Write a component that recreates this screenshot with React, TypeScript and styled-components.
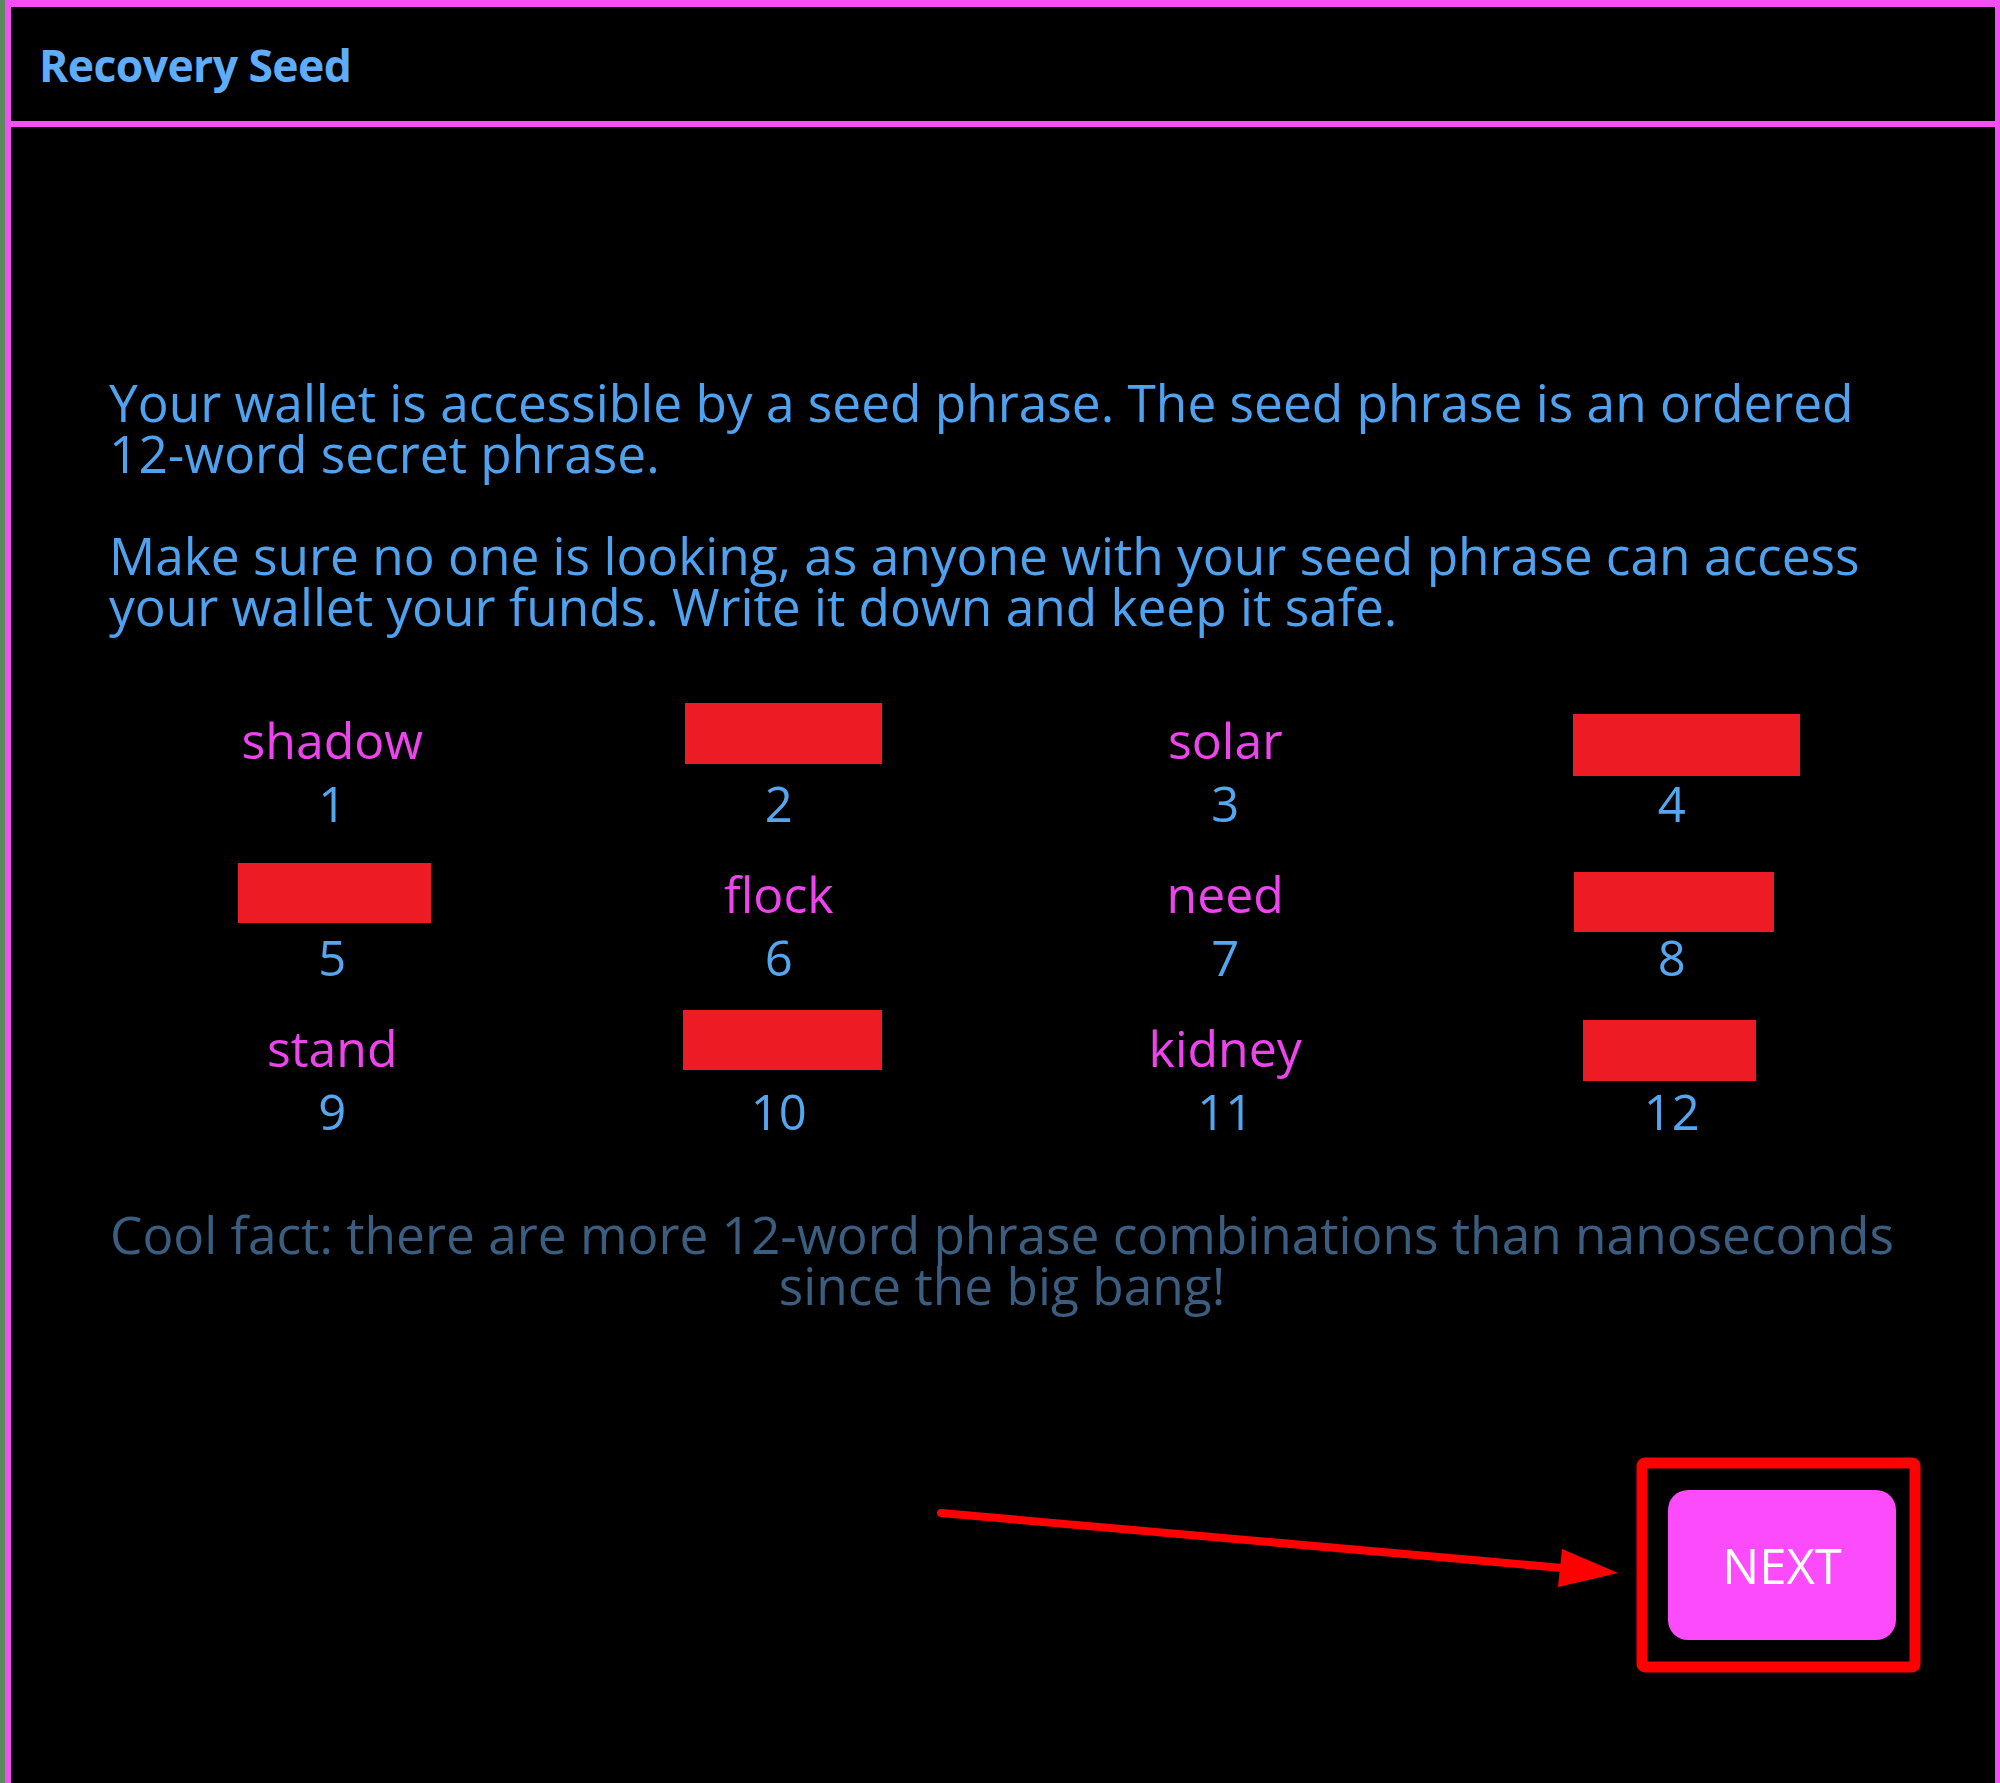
import styled, { createGlobalStyle } from 'styled-components';

const GlobalStyle = createGlobalStyle`
  html, body {
    margin: 0;
    padding: 0;
    background: #5b8a5e;
  }
  body {
    font-family: "Open Sans", "Noto Sans", sans-serif;
  }
`;

interface SeedWord {
  index: number;
  word?: string;
  // redaction box: width, height, offset from the slot centre
  hide?: { w: number; h: number; dx: number; dy: number };
}

const words: SeedWord[] = [
  { index: 1, word: 'shadow' },
  { index: 2, hide: { w: 197, h: 61, dx: 5, dy: -7 } },
  { index: 3, word: 'solar' },
  { index: 4, hide: { w: 227, h: 62, dx: 15, dy: 4 } },
  { index: 5, hide: { w: 193, h: 60, dx: 2, dy: -2 } },
  { index: 6, word: 'flock' },
  { index: 7, word: 'need' },
  { index: 8, hide: { w: 200, h: 60, dx: 2, dy: 7 } },
  { index: 9, word: 'stand' },
  { index: 10, hide: { w: 199, h: 60, dx: 4, dy: -9 } },
  { index: 11, word: 'kidney' },
  { index: 12, hide: { w: 173, h: 61, dx: -2, dy: 2 } },
];

export default function App() {
  return (
    <>
      <GlobalStyle />
      <Page>
        <Panel>
          <Header>
            <Title>Recovery Seed</Title>
          </Header>
          <Body>
            <Paragraph>
              Your wallet is accessible by a seed phrase. The seed phrase is an ordered 12-word secret phrase.
            </Paragraph>
            <Paragraph>
              Make sure no one is looking, as anyone with your seed phrase can access your wallet your funds. Write
              it down and keep it safe.
            </Paragraph>
            <WordGrid>
              {words.map((w) => (
                <WordCell key={w.index}>
                  <WordSlot>
                    {w.word ? (
                      <Word>{w.word}</Word>
                    ) : (
                      <Redacted $w={w.hide!.w} $h={w.hide!.h} $dx={w.hide!.dx} $dy={w.hide!.dy} />
                    )}
                  </WordSlot>
                  <Index>{w.index}</Index>
                </WordCell>
              ))}
            </WordGrid>
            <CoolFact>
              Cool fact: there are more 12-word phrase combinations than nanoseconds
              <br />
              since the big bang!
            </CoolFact>
            <Actions>
              <NextButton type="button">NEXT</NextButton>
            </Actions>
          </Body>
        </Panel>
        <Annotation viewBox="0 0 2000 1783" width="2000" height="1783">
          <line x1="941" y1="1513" x2="1562" y2="1568" stroke="#ff0000" strokeWidth="8" strokeLinecap="round" />
          <polygon points="1618,1573 1558,1587 1562,1549" fill="#ff0000" />
          <rect x="1642" y="1463" width="273" height="204" rx="3" fill="none" stroke="#ff0000" strokeWidth="11" />
        </Annotation>
      </Page>
    </>
  );
}

const Page = styled.div`
  position: relative;
  width: 2000px;
  height: 1783px;
  overflow: hidden;
  padding-left: 5px;
  box-sizing: border-box;
`;

const Panel = styled.div`
  min-height: 1800px;
  background: #000;
  border: 6px solid #f44ef4;
  border-bottom: none;
  border-top-width: 7px;
  border-right-width: 5px;
  box-sizing: border-box;
`;

const Header = styled.div`
  height: 120px;
  display: flex;
  align-items: center;
  padding: 0 0 0 28px;
  box-sizing: border-box;
  border-bottom: 6px solid #f44ef4;
`;

const Title = styled.h1`
  margin: 0;
  font-size: 44.5px;
  font-weight: 700;
  letter-spacing: -0.6px;
  color: #5eacfa;
`;

const Body = styled.div`
  padding: 250px 100px 0 98px;
  display: flex;
  flex-direction: column;
`;

const Paragraph = styled.p`
  margin: 0 0 51px;
  font-size: 51.4px;
  line-height: 51px;
  color: #4ea2f0;
`;

const WordGrid = styled.div`
  display: grid;
  grid-template-columns: repeat(4, 1fr);
  row-gap: 28px;
  margin-top: 26px;
`;

const WordCell = styled.div`
  display: flex;
  flex-direction: column;
  align-items: center;
`;

const WordSlot = styled.div`
  height: 63px;
  display: flex;
  align-items: center;
  justify-content: center;
`;

const Word = styled.span`
  font-size: 50px;
  line-height: 63px;
  color: #ee44ee;
`;

const Redacted = styled.span<{ $w: number; $h: number; $dx: number; $dy: number }>`
  display: block;
  width: ${(p) => p.$w}px;
  height: ${(p) => p.$h}px;
  background: #ed1c24;
  transform: translate(${(p) => p.$dx}px, ${(p) => p.$dy}px);
`;

const Index = styled.span`
  font-size: 49px;
  line-height: 63px;
  color: #55a6f0;
`;

const CoolFact = styled.p`
  margin: 66px -30px 0;
  font-size: 51.4px;
  line-height: 51px;
  text-align: center;
  white-space: nowrap;
  color: #3b5d80;
`;

const Actions = styled.div`
  display: flex;
  justify-content: flex-end;
  margin-top: 179px;
  margin-right: -1px;
`;

const NextButton = styled.button`
  width: 228px;
  height: 150px;
  border: none;
  border-radius: 20px;
  background: #fb4bfb;
  color: #fff;
  font-family: "Open Sans", "Noto Sans", sans-serif;
  font-size: 49px;
  cursor: pointer;
`;

const Annotation = styled.svg`
  position: absolute;
  top: 0;
  left: 0;
  pointer-events: none;
`;
